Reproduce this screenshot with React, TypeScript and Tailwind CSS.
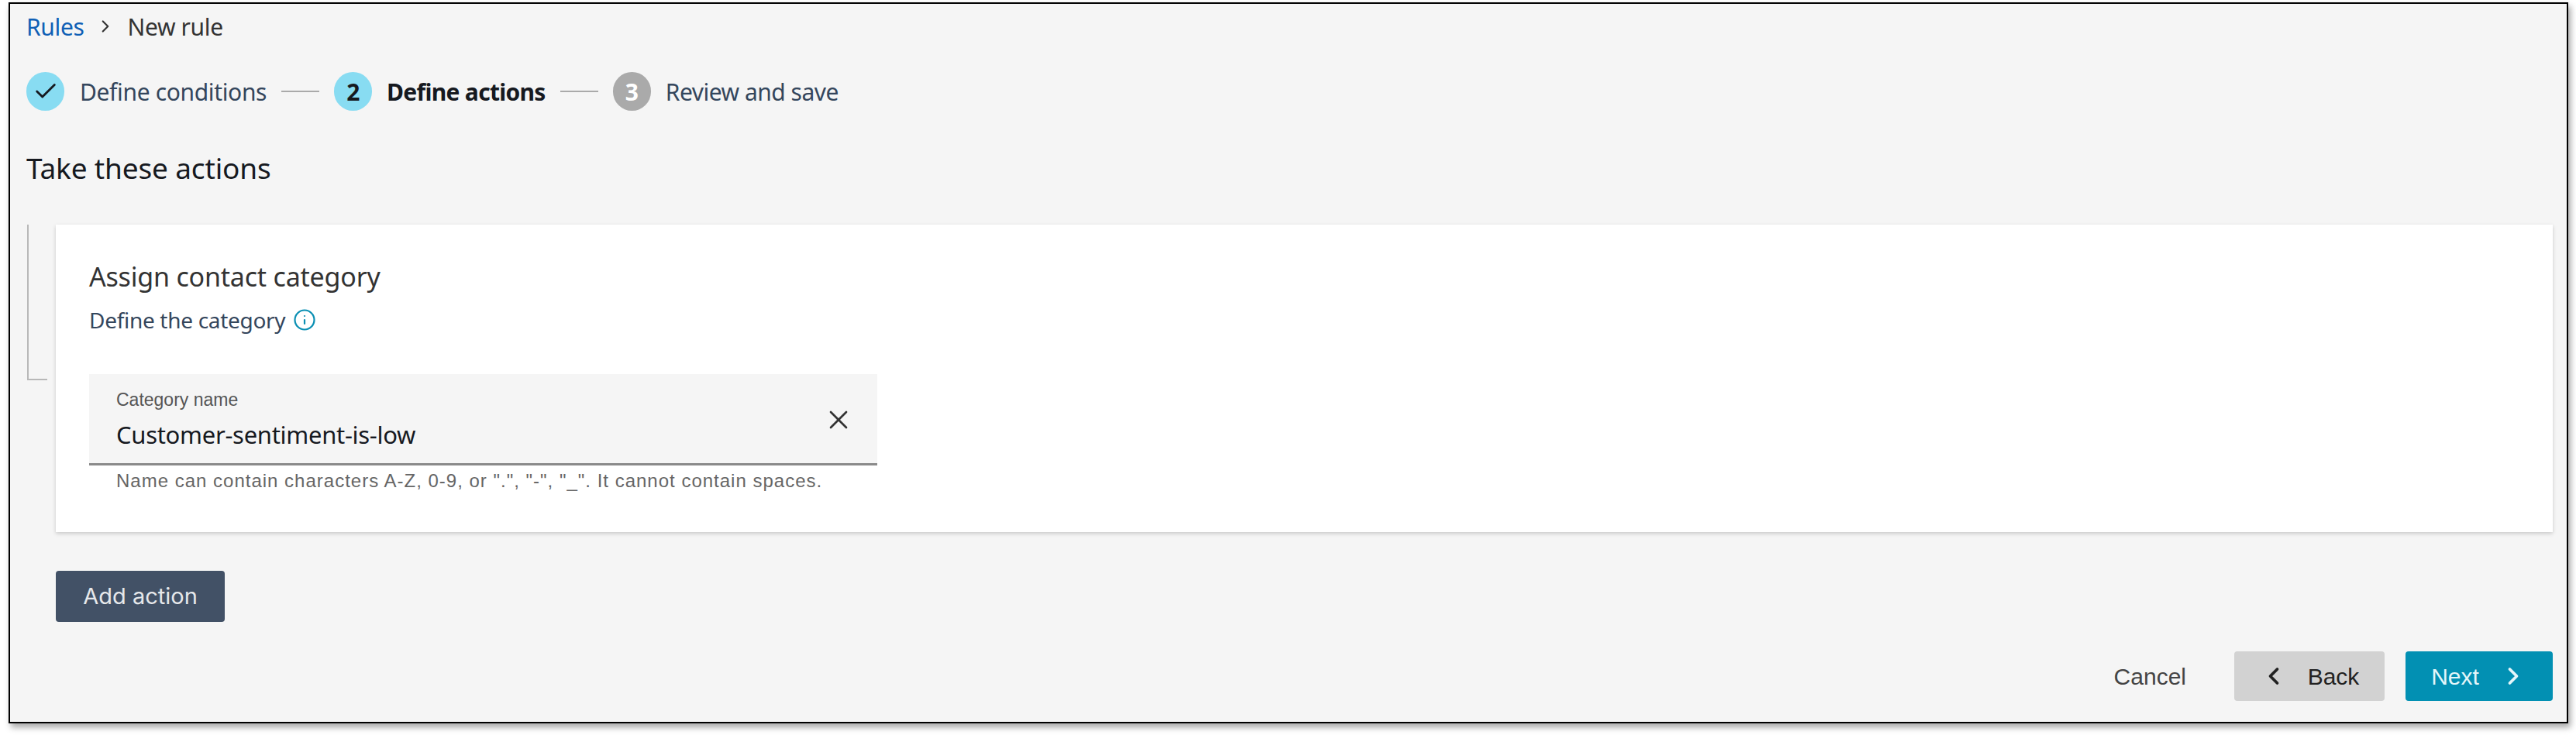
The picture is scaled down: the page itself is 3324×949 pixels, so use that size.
import { Check, ChevronLeft, ChevronRight, Info, X } from "lucide-react";

const ember = "font-['Noto_Sans',sans-serif]";
const helvetica = "font-['Liberation_Sans',Arial,sans-serif]";

function StepLine() {
  return <div className="w-[49px] h-[2px] bg-[#aaaaaa] mx-[19px]" />;
}

export default function App() {
  return (
    <div className="h-[949px] bg-white pt-[3px] pl-[11px] pr-[10px]">
      <div className="h-[931px] flex flex-col bg-[#f5f5f5] border-2 border-black shadow-[3px_5px_8px_rgba(0,0,0,0.35)] pl-[21px] pr-[18px]">
        <nav className={`${ember} h-[28px] mt-[15px] flex items-center text-[30px] tracking-[-0.35px]`}>
          <a className="text-[#0f5fb5]">Rules</a>
          <ChevronRight size={26} strokeWidth={2} className="text-[#333] ml-[15px] mr-[15px]" />
          <span className="text-[#333]">New rule</span>
        </nav>

        <ol className={`${ember} mt-[45px] h-[50px] flex items-center text-[30px] tracking-[-0.35px]`}>
          <li className="flex items-center">
            <span className="w-[49px] h-[50px] rounded-full bg-[#88dcf2] flex items-center justify-center text-[#16191f]">
              <Check size={34} strokeWidth={2} />
            </span>
            <span className="ml-[20px] text-[#34465c]">Define conditions</span>
          </li>
          <StepLine />
          <li className="flex items-center">
            <span className="w-[49px] h-[50px] rounded-full bg-[#88dcf2] flex items-center justify-center font-bold text-[#16191f]">
              2
            </span>
            <span className="ml-[19px] font-bold tracking-[-0.7px] text-[#16191f]">Define actions</span>
          </li>
          <StepLine />
          <li className="flex items-center">
            <span className="w-[49px] h-[50px] rounded-full bg-[#aaaaaa] flex items-center justify-center font-bold text-white">
              3
            </span>
            <span className="ml-[19px] tracking-[-0.5px] text-[#34465c]">Review and save</span>
          </li>
        </ol>

        <h1 className={`${ember} mt-[50px] h-[48px] flex items-center text-[37px] tracking-[-0.15px] text-[#16191f]`}>
          Take these actions
        </h1>

        <div className="mt-[49px] flex items-start">
          <div className="w-[26px] h-[201px] ml-[1px] border-l-2 border-b-2 border-[#b8b8b8] mr-[11px]" />
          <section className="flex-1 h-[397px] bg-white shadow-[0_2px_5px_rgba(0,0,0,0.18)] pl-[43px] pt-[47px]">
            <h2 className={`${ember} h-[40px] flex items-center text-[34px] tracking-[-0.2px] text-[#333]`}>
              Assign contact category
            </h2>
            <div className={`${ember} mt-[18px] h-[36px] flex items-center text-[28px] tracking-[-0.3px] text-[#34465c]`}>
              Define the category
              <Info size={30} strokeWidth={1.75} className="ml-[10px] text-[#0a8fb3]" />
            </div>
            <div className="mt-[52px] w-[1017px] h-[118px] bg-[#f5f5f5] border-b-[3px] border-[#8a8a8a] pl-[35px] pr-[34px] flex items-center justify-between">
              <div className="flex flex-col pt-[2px]">
                <label className={`${helvetica} text-[23px] leading-[26px] text-[#555]`}>Category name</label>
                <span className={`${ember} mt-[13px] text-[31px] leading-[38px] tracking-[-0.3px] text-[#16191f]`}>
                  Customer-sentiment-is-low
                </span>
              </div>
              <X size={40} strokeWidth={1.6} className="text-[#333] -mr-[4px] mt-[2px]" />
            </div>
            <p className={`${helvetica} mt-[7px] pl-[35px] text-[24px] leading-[26px] tracking-[1px] text-[#666]`}>
              Name can contain characters A-Z, 0-9, or ".", "-", "_". It cannot contain spaces.
            </p>
          </section>
        </div>

        <button className="mt-[50px] ml-[38px] w-[218px] h-[66px] rounded-[4px] bg-[#425166] text-[#e6e8eb] font-['Inter',sans-serif] text-[29px]">
          Add action
        </button>

        <div className={`${helvetica} mt-[38px] flex items-center justify-end text-[30px]`}>
          <span className="text-[#444] mr-[62px]">Cancel</span>
          <button className="w-[194px] h-[64px] rounded-[4px] bg-[#d2d2d2] text-[#222] flex items-center justify-center">
            <ChevronLeft size={36} strokeWidth={2.5} className="mr-[26px]" />
            Back
          </button>
          <button className="ml-[27px] w-[190px] h-[64px] rounded-[4px] bg-[#0290b3] text-[#e4f6fa] flex items-center justify-center">
            Next
            <ChevronRight size={36} strokeWidth={2.5} className="ml-[26px]" />
          </button>
        </div>
      </div>
    </div>
  );
}
